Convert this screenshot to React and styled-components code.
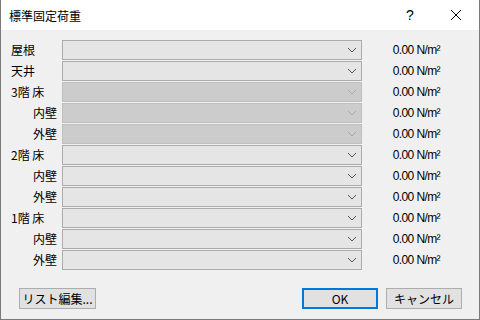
import React from "react";
import styled, { createGlobalStyle } from "styled-components";

const Global = createGlobalStyle`
  html, body {
    margin: 0;
    padding: 0;
    background: #f0f0f0;
  }
  body {
    font-family: "Noto Sans CJK JP", "Liberation Sans", sans-serif;
    font-size: 12px;
    color: #000;
  }
`;

const Window = styled.div`
  box-sizing: border-box;
  width: 480px;
  height: 320px;
  border: 1px solid #7a7a7a;
  border-top: none;
  display: flex;
  flex-direction: column;
  background: #f0f0f0;
`;

const TitleBar = styled.div`
  height: 30px;
  flex: none;
  background: #fff;
  display: flex;
  align-items: center;
  padding-left: 8px;
`;

const Title = styled.div`
  flex: 1;
  font-size: 12px;
`;

const TitleButton = styled.div`
  width: 46px;
  height: 30px;
  display: flex;
  align-items: center;
  justify-content: center;
  font-size: 14px;
  font-family: "Liberation Sans", sans-serif;
`;

const Body = styled.div`
  flex: 1;
  display: flex;
  flex-direction: column;
  padding: 10px 17px 0 10px;
`;

const Rows = styled.div`
  display: flex;
  flex-direction: column;
  gap: 1px;
`;

const Row = styled.div`
  display: flex;
  align-items: center;
  height: 20px;
`;

const Label = styled.div`
  width: 51px;
  padding-left: ${(p) => (p.$indent ? 22 : 0)}px;
  box-sizing: border-box;
  white-space: nowrap;
  line-height: 20px;
`;

const Combo = styled.div`
  box-sizing: border-box;
  width: 300px;
  height: 20px;
  border: 1px solid ${(p) => (p.$disabled ? "#bfbfbf" : "#acacac")};
  background: ${(p) => (p.$disabled ? "#cccccc" : "#e5e5e5")};
  display: flex;
  align-items: center;
  justify-content: flex-end;
  padding-right: 3px;
`;

const Value = styled.div`
  flex: 1;
  text-align: right;
  padding-right: 22px;
  font-family: "Liberation Sans", sans-serif;
  font-size: 12px;
  letter-spacing: -0.6px;
  white-space: nowrap;
`;

const Footer = styled.div`
  display: flex;
  align-items: center;
  margin-top: 18px;
  padding-left: 8px;
  gap: 8px;
`;

const Button = styled.div`
  box-sizing: border-box;
  width: ${(p) => p.$w || 76}px;
  height: 21px;
  background: #e1e1e1;
  border: ${(p) => (p.$default ? "2px solid #0078d7" : "1px solid #adadad")};
  display: flex;
  align-items: center;
  justify-content: center;
  white-space: nowrap;
`;

const Spacer = styled.div`
  flex: 1;
`;

const Chevron = ({ disabled }) => (
  <svg width="12" height="8" viewBox="0 0 12 8">
    <path
      d="M2 2 L6 6 L10 2"
      fill="none"
      stroke={disabled ? "#a8a8a8" : "#555"}
      strokeWidth="1"
    />
  </svg>
);

const rows = [
  { label: "屋根" },
  { label: "天井" },
  { label: "3階 床", disabled: true },
  { label: "内壁", indent: true, disabled: true },
  { label: "外壁", indent: true, disabled: true },
  { label: "2階 床" },
  { label: "内壁", indent: true },
  { label: "外壁", indent: true },
  { label: "1階 床" },
  { label: "内壁", indent: true },
  { label: "外壁", indent: true },
];

export default function App() {
  return (
    <>
      <Global />
      <Window>
        <TitleBar>
          <Title>標準固定荷重</Title>
          <TitleButton>?</TitleButton>
          <TitleButton>
            <svg width="12" height="12" viewBox="0 0 12 12">
              <path d="M1 1 L11 11 M11 1 L1 11" stroke="#000" strokeWidth="1" />
            </svg>
          </TitleButton>
        </TitleBar>
        <Body>
          <Rows>
            {rows.map((r, i) => (
              <Row key={i}>
                <Label $indent={r.indent}>{r.label}</Label>
                <Combo $disabled={r.disabled}>
                  <Chevron disabled={r.disabled} />
                </Combo>
                <Value>0.00 N/m²</Value>
              </Row>
            ))}
          </Rows>
          <Footer>
            <Button $w={77}>リスト編集...</Button>
            <Spacer />
            <Button $default>OK</Button>
            <Button>キャンセル</Button>
          </Footer>
        </Body>
      </Window>
    </>
  );
}
